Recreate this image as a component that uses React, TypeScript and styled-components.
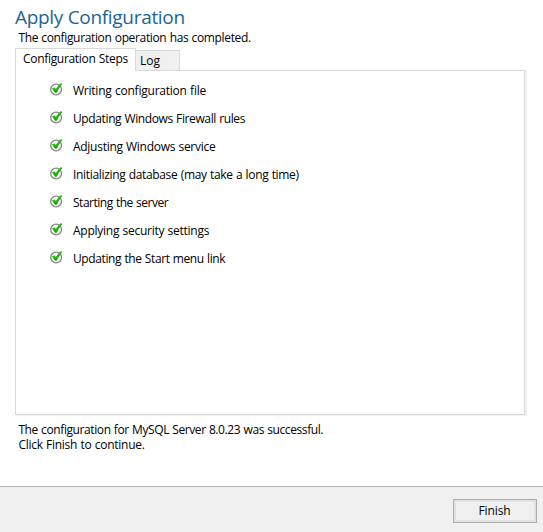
import React from "react";
import styled, { createGlobalStyle } from "styled-components";

const GlobalStyle = createGlobalStyle`
  * { box-sizing: border-box; }
  body { margin: 0; background: #fff; }
`;

const Window = styled.div`
  width: 543px;
  height: 532px;
  display: flex;
  flex-direction: column;
  background: #fff;
  color: #000;
  font: 12px/15px "Open Sans", "Noto Sans", sans-serif;
  white-space: nowrap;
  overflow: hidden;
`;

const Content = styled.main`
  flex: 1;
  padding: 4px 17px 0 15px;
`;

const Title = styled.h1`
  margin: 0;
  font-size: 19px;
  line-height: 26px;
  font-weight: 400;
  letter-spacing: -0.31px;
  color: #1d6496;
`;

const Text = styled.span<{ $tracking: number }>`
  display: block;
  word-spacing: 0.5px;
  letter-spacing: ${(p) => p.$tracking}px;
`;

const Subtitle = styled.p`
  margin: 0 0 3px;
  padding-left: 3.4px;
`;

const TabList = styled.div`
  display: flex;
  align-items: flex-end;
  height: 22px;
`;

const Tab = styled.button<{ $active?: boolean }>`
  font: inherit;
  color: inherit;
  text-align: left;
  border: 1px solid #d9d9d9;
  border-bottom: 0;
  width: ${(p) => (p.$active ? 121 : 44)}px;
  height: ${(p) => (p.$active ? 23 : 20)}px;
  margin-bottom: ${(p) => (p.$active ? -1 : 0)}px;
  padding: ${(p) => (p.$active ? "0 0 3px 7px" : "0 0 0 4px")};
  border-left-width: ${(p) => (p.$active ? 1 : 0)}px;
  background: ${(p) => (p.$active ? "#fff" : "#f0f0f0")};
  z-index: ${(p) => (p.$active ? 1 : 0)};
`;

const Panel = styled.section`
  width: 510px;
  height: 345px;
  border: 1px solid #d9d9d9;
  box-shadow: 1px 1px 0 #f0f0f0, 2px 1px 0 #f0f0f0;
  padding: 5px 0 0 33px;
`;

const Steps = styled.ul`
  margin: 0;
  padding: 0;
  list-style: none;
`;

const Step = styled.li`
  display: flex;
  align-items: center;
  height: 28px;
  gap: 10px;
`;

const CheckSvg = styled.svg`
  width: 14px;
  height: 14px;
  flex: none;
  margin-top: -2px;
`;

const Result = styled.p`
  margin: 7px 0 0;
  padding-left: 3.4px;
`;

const Footer = styled.footer`
  height: 46px;
  display: flex;
  justify-content: flex-end;
  align-items: flex-start;
  padding: 12px 6px 0;
  background: #f0f0f0;
  border-top: 1px solid #b2b2b2;
`;

const Button = styled.button`
  width: 84px;
  height: 24px;
  padding: 0 1px 1px 0;
  font: inherit;
  color: inherit;
  background: #f0f0f0;
  border: 1px solid #adadad;
  box-shadow: inset 0 0 0 2px #e1e1e1;
`;

const CheckIcon = () => (
  <CheckSvg viewBox="0 0 14 14" aria-hidden="true">
    <circle cx="7.1" cy="7.5" r="5.4" fill="#fff" stroke="#858585" strokeWidth="1.3" />
    <path d="M3.6 6.5 L5.6 5.9 L6.9 7.7 C8.4 5.1 9.9 3.3 12 1.5 L12.9 2.2 C10.6 4.7 8.9 7.1 7.6 10.4 L6.1 10.4 Z" fill="#17b300" stroke="#17b300" strokeWidth="0.8" />
  </CheckSvg>
);

const steps = [
  { label: "Writing configuration file", tracking: -0.23 },
  { label: "Updating Windows Firewall rules", tracking: -0.38 },
  { label: "Adjusting Windows service", tracking: -0.28 },
  { label: "Initializing database (may take a long time)", tracking: -0.33 },
  { label: "Starting the server", tracking: -0.48 },
  { label: "Applying security settings", tracking: -0.26 },
  { label: "Updating the Start menu link", tracking: -0.39 },
];

export default function App() {
  return (
    <Window>
      <GlobalStyle />
      <Content>
        <Title>Apply Configuration</Title>
        <Subtitle>
          <Text $tracking={-0.35}>The configuration operation has completed.</Text>
        </Subtitle>
        <TabList role="tablist">
          <Tab role="tab" aria-selected="true" $active>
            <Text $tracking={-0.31}>Configuration Steps</Text>
          </Tab>
          <Tab role="tab" aria-selected="false">
            <Text $tracking={0}>Log</Text>
          </Tab>
        </TabList>
        <Panel>
          <Steps>
            {steps.map((step) => (
              <Step key={step.label}>
                <CheckIcon />
                <Text $tracking={step.tracking}>{step.label}</Text>
              </Step>
            ))}
          </Steps>
        </Panel>
        <Result>
          <Text $tracking={-0.4}>The configuration for MySQL Server 8.0.23 was successful.</Text>
          <Text $tracking={-0.27}>Click Finish to continue.</Text>
        </Result>
      </Content>
      <Footer>
        <Button>
          <Text $tracking={-0.1}>Finish</Text>
        </Button>
      </Footer>
    </Window>
  );
}
